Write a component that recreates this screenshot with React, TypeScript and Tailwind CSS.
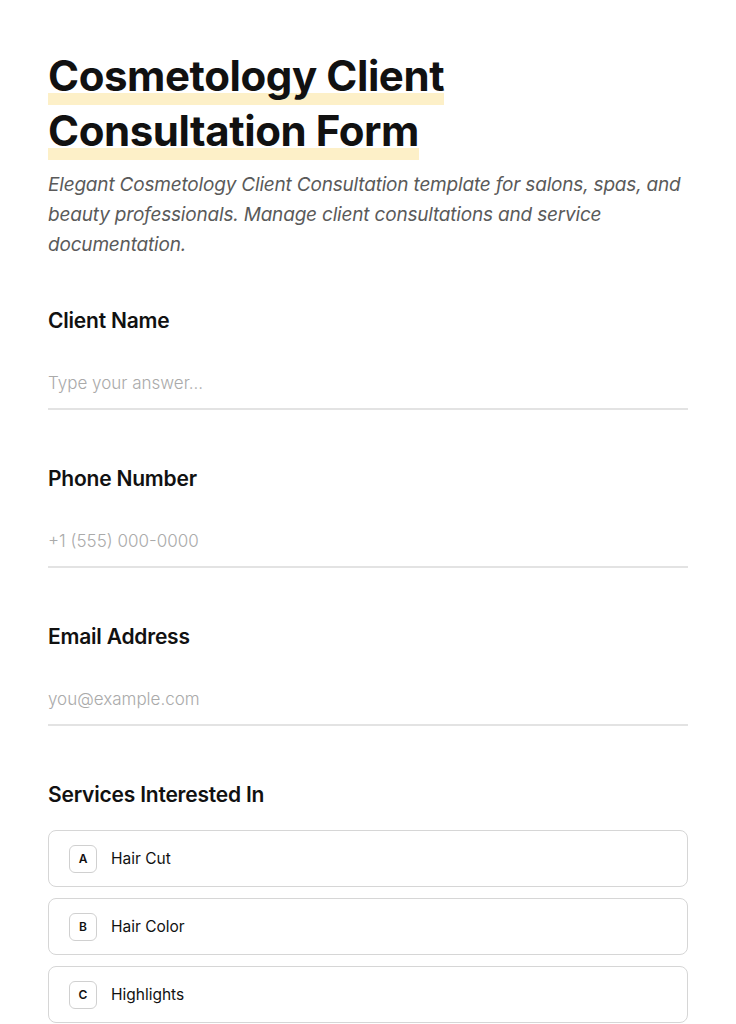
import React from "react"

const fields = [
  { label: "Client Name", placeholder: "Type your answer..." },
  { label: "Phone Number", placeholder: "+1 (555) 000-0000" },
  { label: "Email Address", placeholder: "you@example.com" },
]

const services = [
  { key: "A", label: "Hair Cut" },
  { key: "B", label: "Hair Color" },
  { key: "C", label: "Highlights" },
]

export default function App() {
  return (
    <div className="min-h-screen bg-white font-['Inter',sans-serif] text-[#111]">
      <div className="px-12 pt-[48px] pb-16">
        {/* Title */}
        <h1 className="text-[42px] leading-[55px] font-bold tracking-[-0.01em] max-w-[460px]">
          <span className="pb-[4px] box-decoration-clone bg-[linear-gradient(transparent_79%,#fdf0c8_79%)]">
            Cosmetology Client Consultation Form
          </span>
        </h1>
        <p className="mt-[12px] text-[19px] leading-[30px] italic text-[#5a5a5a] tracking-[-0.01em]">
          Elegant Cosmetology Client Consultation template for salons, spas, and beauty professionals. Manage client
          consultations and service documentation.
        </p>

        {/* Fields */}
        <div className="mt-[47px] flex flex-col gap-[55px]">
          {fields.map((f) => (
            <div key={f.label}>
              <label className="block text-[21px] leading-[28px] font-semibold tracking-[-0.01em]">{f.label}</label>
              <input
                className="mt-[23px] block w-full h-[52px] border-b-2 border-[#e3e3e3] text-[17px] outline-none placeholder:text-[#aaaaaa] font-light"
                placeholder={f.placeholder}
              />
            </div>
          ))}

          {/* Services */}
          <div>
            <div className="text-[21px] leading-[28px] font-semibold tracking-[-0.01em]">Services Interested In</div>
            <div className="mt-[21px] flex flex-col gap-[11px]">
              {services.map((s) => (
                <div
                  key={s.key}
                  className="flex items-center h-[57px] px-5 border border-[#d6d6d6] rounded-lg"
                >
                  <span className="flex items-center justify-center w-7 h-7 rounded-md border border-[#d0d0d0] text-[12px] font-semibold">
                    {s.key}
                  </span>
                  <span className="ml-[14px] text-[15.5px]">{s.label}</span>
                </div>
              ))}
            </div>
          </div>
        </div>
      </div>
    </div>
  )
}
